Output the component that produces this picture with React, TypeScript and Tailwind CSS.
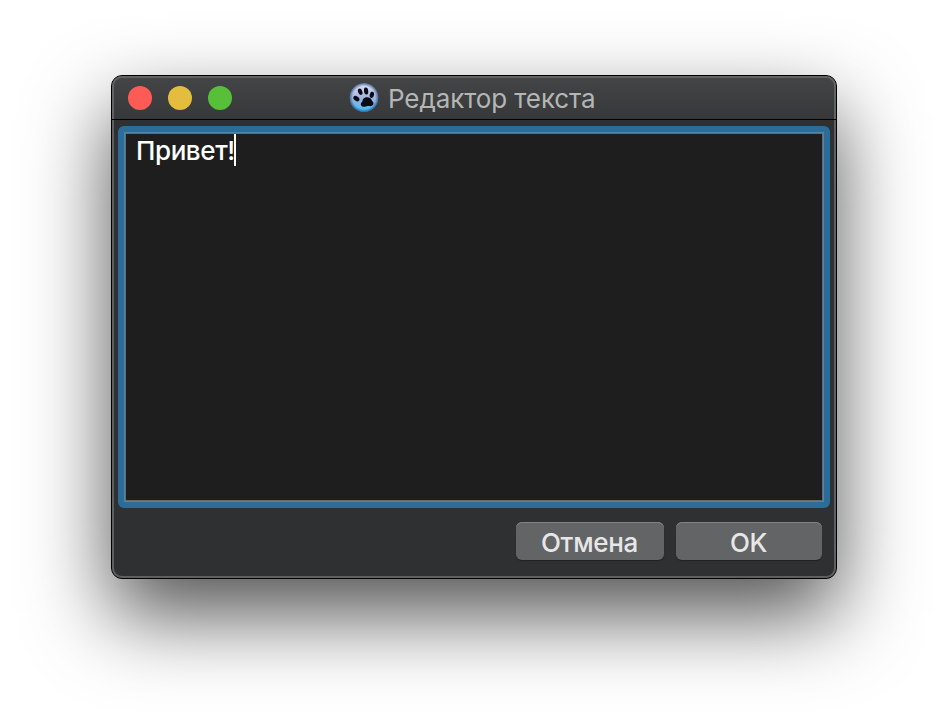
import React from "react";

function PawIcon() {
  return (
    <svg width="30" height="30" viewBox="0 0 30 30" className="shrink-0">
      <defs>
        <linearGradient id="ball" x1="0" y1="0" x2="0" y2="1">
          <stop offset="0" stopColor="#e0e0f4" />
          <stop offset="0.5" stopColor="#a3b3dc" />
          <stop offset="0.78" stopColor="#6fb8ec" />
          <stop offset="1" stopColor="#35bff8" />
        </linearGradient>
        <radialGradient id="rim">
          <stop offset="0.8" stopColor="#1d4a86" stopOpacity="0" />
          <stop offset="1" stopColor="#1d4a86" stopOpacity="0.7" />
        </radialGradient>
      </defs>
      <circle cx="15" cy="14.7" r="14.2" fill="url(#ball)" />
      <circle cx="15" cy="14.7" r="14.2" fill="url(#rim)" />
      <g fill="#080c16">
        <ellipse cx="11.2" cy="8.8" rx="2.1" ry="3.3" transform="rotate(-22 11.2 8.8)" />
        <ellipse cx="17.1" cy="8" rx="2.1" ry="3.5" transform="rotate(-8 17.1 8)" />
        <ellipse cx="22.9" cy="11.8" rx="2.1" ry="3.2" transform="rotate(12 22.9 11.8)" />
        <ellipse cx="7.4" cy="15.6" rx="2.2" ry="3.4" transform="rotate(-55 7.4 15.6)" />
        <path d="M17 14.3c2.5-.5 4.9.4 5.5 2.5.4 1.4 2.2 2 2 3.8-.2 2.1-2.3 2.7-4.2 2.5-1.7-.2-2.9.6-4.7.7-2.3.1-4.2-1.1-3.8-3.1.3-1.3 1.6-1.8 1.8-3.2.3-1.6 1.5-2.8 3.4-3.2z" />
      </g>
    </svg>
  );
}

function TitleBar() {
  return (
    <header className="flex h-[44px] w-full shrink-0 items-center border-b border-black bg-linear-to-b from-[#434546] to-[#363839] pl-[16px]">
      <div className="flex w-[104px] shrink-0 gap-4">
        <span className="size-6 rounded-full bg-[#ff5b56]" />
        <span className="size-6 rounded-full bg-[#e5bd3e]" />
        <span className="size-6 rounded-full bg-[#58c038]" />
      </div>
      <div className="ml-[117px] flex items-center gap-[9px]">
        <PawIcon />
        <h1 className="pt-[3px] text-[26px] leading-[32px] font-[430] tracking-[-0.1px] whitespace-nowrap text-[#b5b6b6]">
          Редактор текста
        </h1>
      </div>
    </header>
  );
}

function DialogButton({ label, className }: { label: string; className: string }) {
  return (
    <button
      className={
        "flex h-[38px] items-center justify-center rounded-[6px] bg-[#636466] pt-[4px] pr-[1px] text-[26px] leading-[32px] font-medium tracking-[-0.3px] text-[#e7e7e7] shadow-[inset_0_1px_0_#828385,0_1px_1px_rgba(0,0,0,0.35)] " +
        className
      }
    >
      {label}
    </button>
  );
}

export default function App() {
  return (
    <main className="h-[726px] w-[948px] overflow-hidden bg-white pt-[75px] pl-[111px] font-['Inter','Liberation_Sans',sans-serif]">
      <section className="relative flex h-[504px] w-[726px] flex-col rounded-[11px] border border-black bg-[#2e3032] shadow-[0_36px_82px_rgba(0,0,0,0.68)]">
        <div className="overflow-hidden rounded-t-[10px]">
          <TitleBar />
        </div>
        <div className="mx-[6px] mt-[6px] h-[382px] rounded-[6px] bg-[#2b6d98] p-[6px]">
          <div className="flex h-full items-start border-2 border-[#686a6c] bg-[#1e1e1e] pl-[10px] outline-1 -outline-offset-1 outline-[#4d87ab]">
            <span className="w-[98px] pt-[1px] text-[26px] leading-[32px] font-medium tracking-[-0.4px] text-white">Привет!</span>
            <span className="h-[32px] w-[2px] bg-white" />
          </div>
        </div>
        <div className="mt-[14px] flex justify-end gap-[12px] pr-[14px]">
          <DialogButton label="Отмена" className="w-[148px]" />
          <DialogButton label="OK" className="w-[146px]" />
        </div>
        <div className="pointer-events-none absolute inset-x-0 top-0 h-[43px] rounded-t-[10px] border-2 border-b-0 border-[#626463]" />
        <div className="pointer-events-none absolute inset-x-0 top-[44px] bottom-0 rounded-b-[10px] border-2 border-t-0 border-[#5e5f60]" />
      </section>
    </main>
  );
}
